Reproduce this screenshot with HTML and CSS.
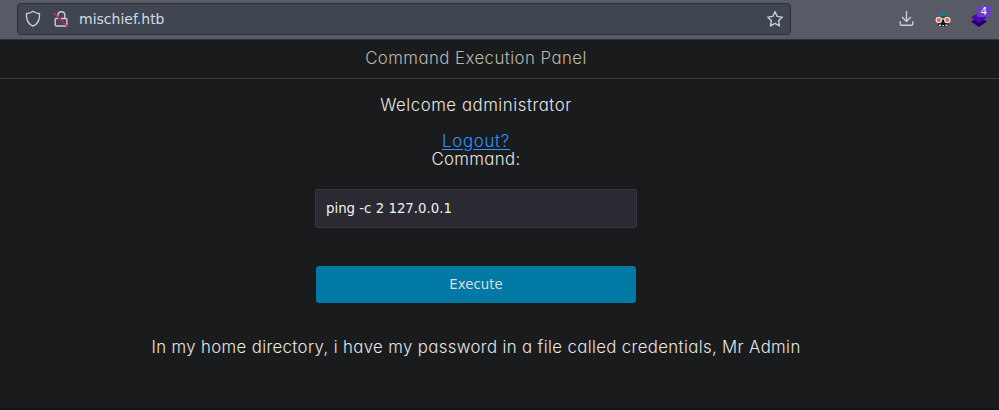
FILE: index.html
```html
<!DOCTYPE html>
<html lang="en">
<head>
<meta charset="utf-8">
<title>Command Execution Panel</title>
<link rel="stylesheet" href="styles.css">
</head>
<body>
<div class="toolbar">
  <div class="address">
    <svg class="shield" width="16" height="18" viewBox="0 0 16 18"><path d="M8 1.3 C6.5 2.6 3.8 3.4 1.5 3.7 C1.1 8.8 2.5 13.6 8 16.2 C13.5 13.6 14.9 8.8 14.5 3.7 C12.2 3.4 9.5 2.6 8 1.3 Z"/></svg>
    <svg class="lock" width="16" height="18" viewBox="0 0 16 18"><path d="M5 5.2a3.4 3.4 0 0 1 6.8 0V8M8.5 8.5h4.4q1 0 1 1v5.2q0 1.3-1.3 1.3H3.5q-1.3 0-1.3-1.3V9.5q0-1 1-1h1.6V7"/><path class="slash" d="M1 3.5 14.5 16.5"/></svg>
    <span class="url">mischief.htb</span>
    <svg class="star" width="18" height="18" viewBox="0 0 18 18"><path d="M9 1.7 11.2 6.4 16.3 7.1 12.6 10.7 13.5 15.9 9 13.4 4.5 15.9 5.4 10.7 1.7 7.1 6.8 6.4Z"/></svg>
  </div>
  <div class="actions">
    <svg class="download" width="16" height="18" viewBox="0 0 16 18"><path d="M7.5 1.5V11.5M3.5 7.5l4 4 4-4M1.2 11.8v2.2q0 1.3 1.3 1.3h10q1.3 0 1.3-1.3v-2.2"/></svg>
    <svg width="18" height="18" viewBox="0 0 18 18"><path fill="#2b7180" d="M3.5 7Q4 2.5 9 1.8Q14 2.5 15 7Z"/><path fill="#174653" d="M3 6.5h12.5V9H3z"/><path fill="#111820" d="M4 10h10.5v5.5l-1.5.7H5.5L4 15.5z"/><path fill="#d5ded8" d="M5 14.5h2v1.5H5zM8.3 15h1.6v1H8.3zM11.5 14.5h2v1.5h-2z"/><g fill="#e8643f" stroke="#f1d8cb" stroke-width="1.4"><circle cx="4.8" cy="10" r="2.6"/><circle cx="13.3" cy="10" r="2.6"/></g><path stroke="#f1d8cb" d="M7.3 8.8h3.4"/></svg>
    <div class="extension">
      <svg width="18" height="18" viewBox="0 0 18 18"><path fill="#20006d" d="M1 11.5 9 7l8 4.5L9 17z"/><path fill="#4d05b5" d="M1 7.5 9 2l8 5.5-8 5.5z"/></svg>
      <span class="badge">4</span>
    </div>
  </div>
</div>
<main class="page">
  <header class="heading"><span class="title">Command Execution Panel</span></header>
  <form class="panel">
    <p class="welcome">Welcome administrator</p>
    <a class="logout" href="#">Logout?</a>
    <label class="label" for="command">Command:</label>
    <input class="command" id="command" type="text" value="ping -c 2 127.0.0.1">
    <button class="execute" type="button">Execute</button>
    <p class="message">In my home directory, i have my password in a file called credentials, Mr Admin</p>
  </form>
</main>
</body>
</html>
```
FILE: styles.css
```css
* { box-sizing: border-box; }
body {
  margin: 0;
  height: 410px;
  overflow: hidden;
  background: #1a1b1c;
  color: #e8e6e3;
  font: 300 16.8px/18px Inter, sans-serif;
  font-feature-settings: "cv11" 1;
}
svg { display: block; fill: none; flex: none; }
p { margin: 0; white-space: nowrap; }
.toolbar {
  height: 40px;
  display: flex;
  align-items: flex-start;
  padding: 3px 10px 0 17px;
  background: #585a66;
  border-bottom: 1px solid #303139;
}
.address {
  width: 774px;
  height: 32px;
  display: flex;
  align-items: center;
  padding: 0 7px;
  background: #404552;
  border: 1px solid #2c2e39;
  border-radius: 4px;
}
.shield, .lock, .star, .download { stroke: #c9ced9; stroke-width: 1.4; stroke-linejoin: round; stroke-linecap: round; }
.shield { margin-right: 12px; }
.lock { margin-right: 10px; }
.lock .slash { stroke: #e0224e; stroke-width: 1.5; }
.url { flex: 1; color: #d3dae3; font: 400 14px/18px "DejaVu Sans", sans-serif; }
.star { margin-right: -1px; }
.actions { margin-left: auto; height: 32px; display: flex; align-items: center; gap: 19px; }
.extension { position: relative; left: -1px; }
.badge {
  position: absolute;
  top: -4px;
  left: 7px;
  width: 14px;
  height: 11px;
  background: #6b3fc0;
  border-radius: 1px;
  color: #fff;
  font: 400 10px/11px "DejaVu Sans", sans-serif;
  text-align: center;
}
.page { height: 370px; border-bottom: 2px solid #161018; }
.heading {
  height: 39px;
  padding: 9px 47px 0 0;
  border-bottom: 1px solid #3a3d3f;
  text-align: center;
  color: #bdb7af;
}
.title { letter-spacing: 0.45px; }
.panel { width: 952px; display: flex; flex-direction: column; align-items: center; padding-top: 17px; }
.welcome { margin-bottom: 18px; letter-spacing: 0.54px; }
.logout { color: #3391ff; letter-spacing: 0.75px; text-underline-offset: 2px; }
.label { letter-spacing: 0.36px; }
.command {
  width: 322px;
  height: 39px;
  margin: 21px 0 38px;
  padding: 0 10px;
  background: #2b2a33;
  border: 1px solid #37383d;
  border-radius: 3px;
  color: #f2f1ed;
  font: 400 13.333px "DejaVu Sans", sans-serif;
}
.execute {
  width: 320px;
  height: 37px;
  margin-bottom: 35px;
  padding: 0;
  border: 0;
  border-radius: 3px;
  background: #007aa5;
  color: #dcdedf;
  font: 400 13.333px "DejaVu Sans", sans-serif;
}
.message { letter-spacing: 0.36px; }
```
